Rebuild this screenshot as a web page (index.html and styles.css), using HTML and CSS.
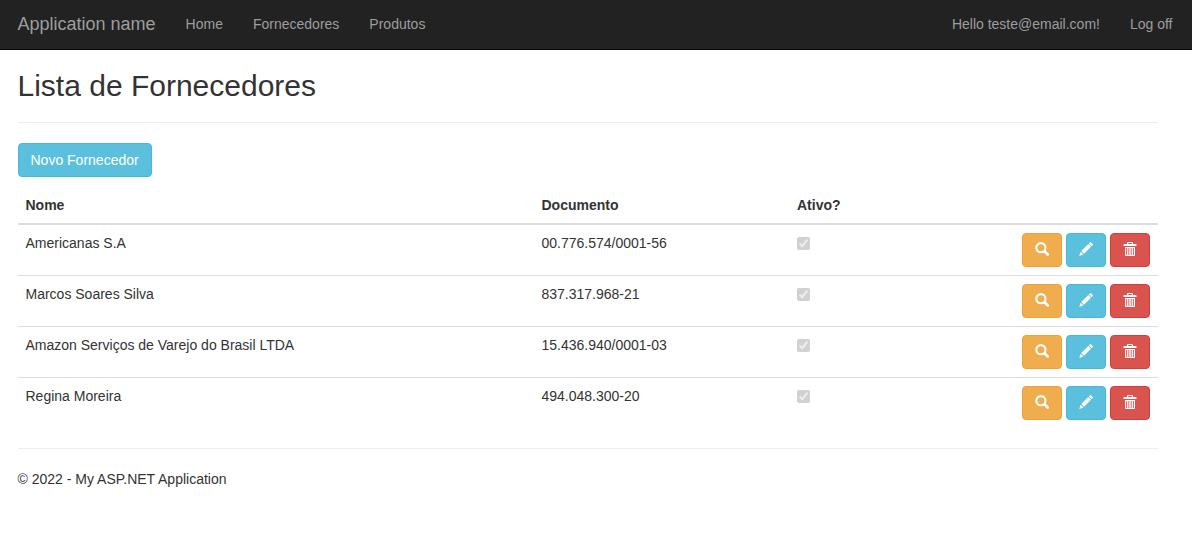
FILE: index.html
```html
<!DOCTYPE html>
<html lang="pt-BR">
<head>
<meta charset="utf-8">
<title>Lista de Fornecedores</title>
<link rel="stylesheet" href="styles.css">
</head>
<body>
<svg class="sprite" aria-hidden="true">
  <symbol id="search" viewBox="0 0 14 14"><circle cx="5.9" cy="5.7" r="4.6" fill="none" stroke="#fff" stroke-width="2.1"/><path d="M9.6 9.4l3.1 3.1" stroke="#fff" stroke-width="2.6" stroke-linecap="round"/></symbol>
  <symbol id="pencil" viewBox="0 0 14 14"><path fill="#fff" d="M11 .4q.6-.6 1.2 0l1.5 1.5q.6.6 0 1.2l-1.1 1.1-2.7-2.7zM9.3 2.1L12 4.8l-7 7-2.7-2.7zM1.7 9.7l2.7 2.7L.2 13.9z"/></symbol>
  <symbol id="trash" viewBox="0 0 14 14"><path fill="#fff" fill-rule="evenodd" d="M4 2V1q0-1 1-1h4q1 0 1 1v1h2.8q.7 0 .7.7V4H.5V2.700q0-.7.7-.7zM5.200 1v1h3.600V1zM2 5h10v8q0 1-1 1H3q-1 0-1-1zM3.200 6v7h.9V6zm2.200 0v7h.9V6zm2.300 0v7h.9V6zM9.900 6v7h.9V6z"/></symbol>
</svg>
<nav class="navbar">
  <a class="brand">Application name</a>
  <ul class="nav">
    <li>Home</li>
    <li>Fornecedores</li>
    <li>Produtos</li>
  </ul>
  <ul class="nav nav-right">
    <li>Hello teste@email.com!</li>
    <li>Log off</li>
  </ul>
</nav>
<main class="container">
  <h2>Lista de Fornecedores</h2>
  <hr>
  <p class="toolbar"><a class="btn btn-info">Novo Fornecedor</a></p>
  <table class="table">
    <colgroup><col class="col-name"><col class="col-doc"><col class="col-active"><col></colgroup>
    <thead>
      <tr><th>Nome</th><th>Documento</th><th>Ativo?</th><th></th></tr>
    </thead>
    <tbody>
      <tr>
        <td>Americanas S.A</td><td>00.776.574/0001-56</td><td><input type="checkbox" checked disabled></td>
        <td><div class="actions"><a class="btn btn-warning"><svg><use href="#search"/></svg></a><a class="btn btn-info"><svg><use href="#pencil"/></svg></a><a class="btn btn-danger"><svg><use href="#trash"/></svg></a></div></td>
      </tr>
      <tr>
        <td>Marcos Soares Silva</td><td>837.317.968-21</td><td><input type="checkbox" checked disabled></td>
        <td><div class="actions"><a class="btn btn-warning"><svg><use href="#search"/></svg></a><a class="btn btn-info"><svg><use href="#pencil"/></svg></a><a class="btn btn-danger"><svg><use href="#trash"/></svg></a></div></td>
      </tr>
      <tr>
        <td>Amazon Serviços de Varejo do Brasil LTDA</td><td>15.436.940/0001-03</td><td><input type="checkbox" checked disabled></td>
        <td><div class="actions"><a class="btn btn-warning"><svg><use href="#search"/></svg></a><a class="btn btn-info"><svg><use href="#pencil"/></svg></a><a class="btn btn-danger"><svg><use href="#trash"/></svg></a></div></td>
      </tr>
      <tr>
        <td>Regina Moreira</td><td>494.048.300-20</td><td><input type="checkbox" checked disabled></td>
        <td><div class="actions"><a class="btn btn-warning"><svg><use href="#search"/></svg></a><a class="btn btn-info"><svg><use href="#pencil"/></svg></a><a class="btn btn-danger"><svg><use href="#trash"/></svg></a></div></td>
      </tr>
    </tbody>
  </table>
  <hr>
  <footer>© 2022 - My ASP.NET Application</footer>
</main>
</body>
</html>
```
FILE: styles.css
```css
* { box-sizing: border-box; }
body {
  margin: 0;
  background: #fff;
  color: #333;
  font: 14px/20px "Liberation Sans", Arial, sans-serif;
}
.sprite { display: none; }
.navbar {
  display: flex;
  height: 50px;
  padding: 0 4.5px 0 2.5px;
  background: #222;
  border-bottom: 1px solid #080808;
  color: #9d9d9d;
}
.brand { padding: 14px 15px; font-size: 18px; }
.nav { display: flex; margin: 0; padding: 0; list-style: none; }
.nav li { padding: 14px 15px; }
.nav-right { margin-left: auto; }
.container { width: 1140px; margin-left: 17.5px; padding-top: 19px; }
h2 { margin: 0; font-size: 30px; font-weight: 500; line-height: 33px; }
hr { margin: 20px 0; border: 0; border-top: 1px solid #eee; }
.toolbar { display: flex; margin: 0 0 10px; }
.btn {
  display: flex;
  align-items: center;
  height: 34px;
  padding: 0 12px;
  border: 1px solid;
  border-radius: 4px;
  color: #fff;
}
.btn-info { background: #5bc0de; border-color: #46b8da; }
.btn-warning { background: #f0ad4e; border-color: #eea236; }
.btn-danger { background: #d9534f; border-color: #d43f3a; }
.btn svg { display: block; width: 14px; height: 14px; margin-bottom: 2px; }
.table {
  width: 100%;
  margin-bottom: 20px;
  border-spacing: 0;
  table-layout: fixed;
}
.col-name { width: 516px; }
.col-doc { width: 255.5px; }
.col-active { width: 152px; }
th, td { padding: 8px; text-align: left; vertical-align: top; }
th { height: 38px; border-bottom: 2px solid #ddd; }
tbody tr + tr td { border-top: 1px solid #ddd; }
.actions { display: flex; justify-content: flex-end; gap: 4px; }
.actions .btn { width: 40px; }
input { display: block; width: 13px; height: 13px; margin: 4px 0 0; }
```
